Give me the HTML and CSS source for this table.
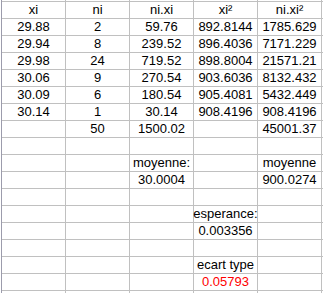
FILE: index.html
```html
<!DOCTYPE html>
<html>
<head>
<meta charset="utf-8">
<link rel="stylesheet" href="styles.css">
</head>
<body>
<div class="sheet">
  <div class="c"></div><div class="c"></div><div class="c"></div><div class="c"></div><div class="c"></div><div class="c"></div>
  <div class="c">xi</div><div class="c">ni</div><div class="c">ni.xi</div><div class="c">xi²</div><div class="c">ni.xi²</div><div class="c"></div>
  <div class="c">29.88</div><div class="c">2</div><div class="c">59.76</div><div class="c">892.8144</div><div class="c">1785.629</div><div class="c"></div>
  <div class="c">29.94</div><div class="c">8</div><div class="c">239.52</div><div class="c">896.4036</div><div class="c">7171.229</div><div class="c"></div>
  <div class="c">29.98</div><div class="c">24</div><div class="c">719.52</div><div class="c">898.8004</div><div class="c">21571.21</div><div class="c"></div>
  <div class="c">30.06</div><div class="c">9</div><div class="c">270.54</div><div class="c">903.6036</div><div class="c">8132.432</div><div class="c"></div>
  <div class="c">30.09</div><div class="c">6</div><div class="c">180.54</div><div class="c">905.4081</div><div class="c">5432.449</div><div class="c"></div>
  <div class="c">30.14</div><div class="c">1</div><div class="c">30.14</div><div class="c">908.4196</div><div class="c">908.4196</div><div class="c"></div>
  <div class="c"></div><div class="c">50</div><div class="c">1500.02</div><div class="c"></div><div class="c">45001.37</div><div class="c"></div>
  <div class="c"></div><div class="c"></div><div class="c"></div><div class="c"></div><div class="c"></div><div class="c"></div>
  <div class="c"></div><div class="c"></div><div class="c">moyenne:</div><div class="c"></div><div class="c">moyenne</div><div class="c"></div>
  <div class="c"></div><div class="c"></div><div class="c">30.0004</div><div class="c"></div><div class="c">900.0274</div><div class="c"></div>
  <div class="c"></div><div class="c"></div><div class="c"></div><div class="c"></div><div class="c"></div><div class="c"></div>
  <div class="c"></div><div class="c"></div><div class="c"></div><div class="c">esperance:</div><div class="c"></div><div class="c"></div>
  <div class="c"></div><div class="c"></div><div class="c"></div><div class="c">0.003356</div><div class="c"></div><div class="c"></div>
  <div class="c"></div><div class="c"></div><div class="c"></div><div class="c"></div><div class="c"></div><div class="c"></div>
  <div class="c"></div><div class="c"></div><div class="c"></div><div class="c">ecart type</div><div class="c"></div><div class="c"></div>
  <div class="c"></div><div class="c"></div><div class="c"></div><div class="c red">0.05793</div><div class="c"></div><div class="c"></div>
  <div class="c"></div><div class="c"></div><div class="c"></div><div class="c"></div><div class="c"></div><div class="c"></div>
</div>
</body>
</html>
```

FILE: styles.css
```css
html, body {
  margin: 0;
  padding: 0;
  background: #ffffff;
  overflow: hidden;
}
.sheet {
  display: grid;
  grid-template-columns: repeat(5, 63px) 1px;
  grid-auto-rows: 16px;
  gap: 1px;
  background: #c0c0c0;
  border-left: 1px solid #9c9cac;
  margin-left: 1px;
  margin-top: -15px;
  width: max-content;
  font-family: "Liberation Sans", Arial, sans-serif;
  font-size: 13px;
  color: #000000;
}
.c {
  background: #ffffff;
  line-height: 16px;
  text-align: center;
  white-space: nowrap;
  display: flex;
  justify-content: center;
}
.red {
  color: #ff0000;
}
```
